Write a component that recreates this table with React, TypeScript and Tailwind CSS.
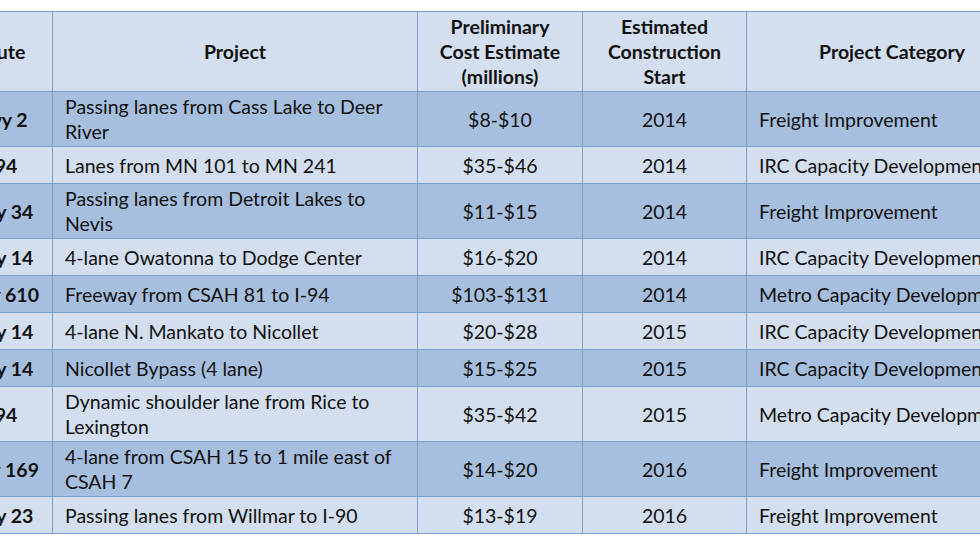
import React from 'react'

type Row = {
  route: string
  project: string[]
  cost: string
  start: string
  category: string
  dark: boolean
}

const rows: Row[] = [
  { route: 'Hwy 2', project: ['Passing lanes from Cass Lake to Deer', 'River'], cost: '$8-$10', start: '2014', category: 'Freight Improvement', dark: true },
  { route: 'I-94', project: ['Lanes from MN 101 to MN 241'], cost: '$35-$46', start: '2014', category: 'IRC Capacity Development', dark: false },
  { route: 'Hwy 34', project: ['Passing lanes from Detroit Lakes to', 'Nevis'], cost: '$11-$15', start: '2014', category: 'Freight Improvement', dark: true },
  { route: 'Hwy 14', project: ['4-lane Owatonna to Dodge Center'], cost: '$16-$20', start: '2014', category: 'IRC Capacity Development', dark: false },
  { route: 'Hwy 610', project: ['Freeway from CSAH 81 to I-94'], cost: '$103-$131', start: '2014', category: 'Metro Capacity Development', dark: true },
  { route: 'Hwy 14', project: ['4-lane N. Mankato to Nicollet'], cost: '$20-$28', start: '2015', category: 'IRC Capacity Development', dark: false },
  { route: 'Hwy 14', project: ['Nicollet Bypass (4 lane)'], cost: '$15-$25', start: '2015', category: 'IRC Capacity Development', dark: true },
  { route: 'I-94', project: ['Dynamic shoulder lane from Rice to', 'Lexington'], cost: '$35-$42', start: '2015', category: 'Metro Capacity Development', dark: false },
  { route: 'Hwy 169', project: ['4-lane from CSAH 15 to 1 mile east of', 'CSAH 7'], cost: '$14-$20', start: '2016', category: 'Freight Improvement', dark: true },
  { route: 'Hwy 23', project: ['Passing lanes from Willmar to I-90'], cost: '$13-$19', start: '2016', category: 'Freight Improvement', dark: false },
]

const cell = 'border border-[#7ba0cd] h-[37px] py-[2px] align-middle whitespace-nowrap'

export default function App() {
  return (
    <div className="w-[980px] h-[552px] overflow-hidden bg-white pt-[11px] font-['Lato',sans-serif] text-[19.5px] leading-[25px] text-[#111111]">
      <table className="ml-[-54px] table-fixed border-collapse w-[1091px]">
        <colgroup>
          <col className="w-[106px]" />
          <col className="w-[365px]" />
          <col className="w-[165px]" />
          <col className="w-[164px]" />
          <col className="w-[291px]" />
        </colgroup>
        <thead>
          <tr className="bg-[#d3dfee] font-bold">
            <th className={`${cell} text-center`}>Route</th>
            <th className={`${cell} text-center`}>Project</th>
            <th className={`${cell} text-center`}>
              Preliminary
              <br />
              Cost Estimate
              <br />
              (millions)
            </th>
            <th className={`${cell} text-center`}>
              Estimated
              <br />
              Construction
              <br />
              Start
            </th>
            <th className={`${cell} text-center`}>Project Category</th>
          </tr>
        </thead>
        <tbody>
          {rows.map((r, i) => (
            <tr key={i} className={r.dark ? 'bg-[#a7bfde]' : 'bg-[#d3dfee]'}>
              <td className={`${cell} text-center font-bold`}>{r.route}</td>
              <td className={`${cell} px-3`}>
                {r.project.map((line, j) => (
                  <div key={j}>{line}</div>
                ))}
              </td>
              <td className={`${cell} text-center`}>{r.cost}</td>
              <td className={`${cell} text-center`}>{r.start}</td>
              <td className={`${cell} px-3`}>{r.category}</td>
            </tr>
          ))}
        </tbody>
      </table>
    </div>
  )
}
